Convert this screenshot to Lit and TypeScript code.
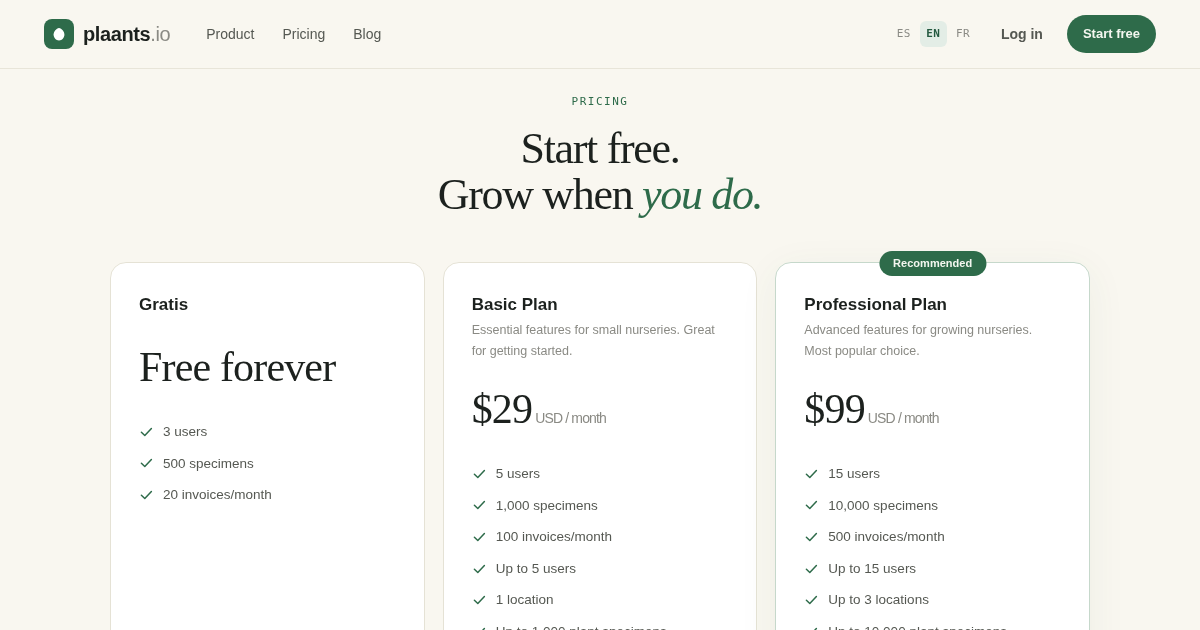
import { LitElement, html, css } from "lit";
import { customElement } from "lit/decorators.js";

const check = html`<svg class="check" viewBox="0 0 14 14" fill="none" stroke="currentColor" stroke-width="1.5" stroke-linecap="round" stroke-linejoin="round"><path d="M2.4 7.3 5.8 10.5 12.4 3.5"/></svg>`;

interface Plan { name: string; desc?: string[]; price?: string; free?: string; feats: string[]; rec?: boolean; }

const plans: Plan[] = [
  { name: "Gratis", free: "Free forever", feats: ["3 users", "500 specimens", "20 invoices/month"] },
  { name: "Basic Plan", desc: ["Essential features for small nurseries. Great for getting started."], price: "$29",
    feats: ["5 users", "1,000 specimens", "100 invoices/month", "Up to 5 users", "1 location", "Up to 1,000 plant specimens"] },
  { name: "Professional Plan", desc: ["Advanced features for growing nurseries. Most popular choice."], price: "$99", rec: true,
    feats: ["15 users", "10,000 specimens", "500 invoices/month", "Up to 15 users", "Up to 3 locations", "Up to 10,000 plant specimens"] },
];

@customElement("app-root")
export class AppRoot extends LitElement {
  static styles = css`
    :host { display: block; height: 630px; overflow: hidden; background: #f9f7f0; font-family: "Liberation Sans", Arial, sans-serif; color: #1c211e; }
    * { box-sizing: border-box; }
    .nav { height: 69px; border-bottom: 1px solid #e8e5d9; padding: 0 44px; display: flex; align-items: center; justify-content: space-between; will-change: transform; }
    .left, .right { display: flex; align-items: center; }
    .logo { width: 30px; height: 30px; border-radius: 8px; background: #2e6b4a; display: flex; align-items: center; justify-content: center; }
    .logo svg { width: 16px; height: 16px; }
    .brand { margin-left: 9px; font-size: 20px; font-weight: 700; letter-spacing: -0.4px; color: #1c211e; }
    .brand span { font-weight: 400; color: #8a8a84; }
    .links { display: flex; gap: 28px; margin-left: 36px; font-size: 14px; color: #555852; }
    .langs { display: flex; align-items: center; font-family: "DejaVu Sans Mono", monospace; font-size: 11px; color: #8a8a84; }
    .langs span { padding: 0 6.5px; height: 26px; line-height: 26px; border-radius: 6px; letter-spacing: 0.4px; margin-right: 2.5px; }
    .langs span:last-child { margin-right: 0; }
    .langs .on { background: #e3ede6; color: #245a41; font-weight: 700; }
    .login { margin-left: 24.5px; font-size: 14px; font-weight: 700; color: #555852; }
    .cta { margin-left: 24px; height: 38px; padding: 0 16px 1px; border-radius: 19px; background: #2e6b4a; color: #f3f6ef; font-size: 13px; font-weight: 700; display: flex; align-items: center; }
    .head { text-align: center; padding-top: 26px; will-change: transform; }
    .eyebrow { font-family: "DejaVu Sans Mono", monospace; font-size: 11px; letter-spacing: 1.5px; color: #2e6b4a; line-height: 14px; }
    h1 { margin: 17px 0 0; font-family: "Liberation Serif", serif; font-weight: 400; font-size: 44px; line-height: 46px; letter-spacing: -1.32px; color: #1c211e; }
    h1 em { color: #2e6b4a; font-style: italic; }
    .cards { width: 980px; margin: 44px auto 0; display: grid; grid-template-columns: repeat(3, 1fr); gap: 18px; will-change: transform; }
    .card { position: relative; height: 520px; background: #fff; border: 1px solid #e5e2d5; border-radius: 16px; padding: 28px; }
    .card.rec { border-color: #c6d8cb; box-shadow: 0 8px 40px rgba(46, 107, 74, 0.06); }
    .badge { position: absolute; top: -12px; left: 50%; transform: translateX(-50%); height: 25px; padding: 0 14px 1px; border-radius: 13px; background: #2e6b4a; color: #f3f6ef; font-size: 11px; font-weight: 700; letter-spacing: 0.02px; display: flex; align-items: center; white-space: nowrap; }
    h3 { margin: 0; font-size: 17px; font-weight: 700; line-height: 27px; color: #1c211e; }
    .desc { margin: 1.5px 0 0; font-size: 12.5px; line-height: 21px; color: #8a8a84; height: 42px; }
    .free { margin-top: 19px; font-family: "Liberation Serif", serif; font-size: 42px; line-height: 60px; letter-spacing: -0.84px; color: #1c211e; }
    .free + ul { margin-top: 24px; }
    .price { margin-top: 17.5px; display: flex; align-items: baseline; height: 60px; line-height: 60px; letter-spacing: -0.84px; }
    .amt { font-family: "Liberation Serif", serif; font-size: 42px; color: #1c211e; }
    .per { margin-left: 3px; font-size: 14px; color: #8a8a84; }
    ul { list-style: none; margin: 24px 0 0; padding: 0; display: flex; flex-direction: column; gap: 10px; }
    li { display: flex; align-items: center; gap: 10px; font-size: 13.5px; line-height: 21.6px; color: #555852; }
    .check { width: 14px; height: 14px; color: #2e6b4a; flex: none; }
  `;

  render() {
    return html`
      <header class="nav">
        <div class="left">
          <div class="logo"><svg viewBox="0 0 16 16"><path fill="#fff" d="M8 1.9C10.6 2.4 13.4 5 13.4 8.6 13.4 11.8 11 14.6 8 14.6 5 14.6 2.6 11.8 2.6 8.6 2.6 5 5.4 2.4 8 1.9Z"/></svg></div>
          <div class="brand">plaants<span>.io</span></div>
          <nav class="links"><a>Product</a><a>Pricing</a><a>Blog</a></nav>
        </div>
        <div class="right">
          <div class="langs"><span>ES</span><span class="on">EN</span><span>FR</span></div>
          <a class="login">Log in</a>
          <a class="cta">Start free</a>
        </div>
      </header>
      <section class="head">
        <div class="eyebrow">PRICING</div>
        <h1>Start free.<br />Grow when <em>you do.</em></h1>
      </section>
      <section class="cards">
        ${plans.map((p) => html`
          <article class="card ${p.rec ? "rec" : ""}">
            ${p.rec ? html`<div class="badge">Recommended</div>` : ""}
            <h3>${p.name}</h3>
            ${p.desc ? html`<p class="desc">${p.desc[0]}</p>` : ""}
            ${p.free
              ? html`<div class="free">${p.free}</div>`
              : html`<div class="price"><span class="amt">${p.price}</span><span class="per">USD / month</span></div>`}
            <ul>${p.feats.map((f) => html`<li>${check}<span>${f}</span></li>`)}</ul>
          </article>`)}
      </section>
    `;
  }
}
